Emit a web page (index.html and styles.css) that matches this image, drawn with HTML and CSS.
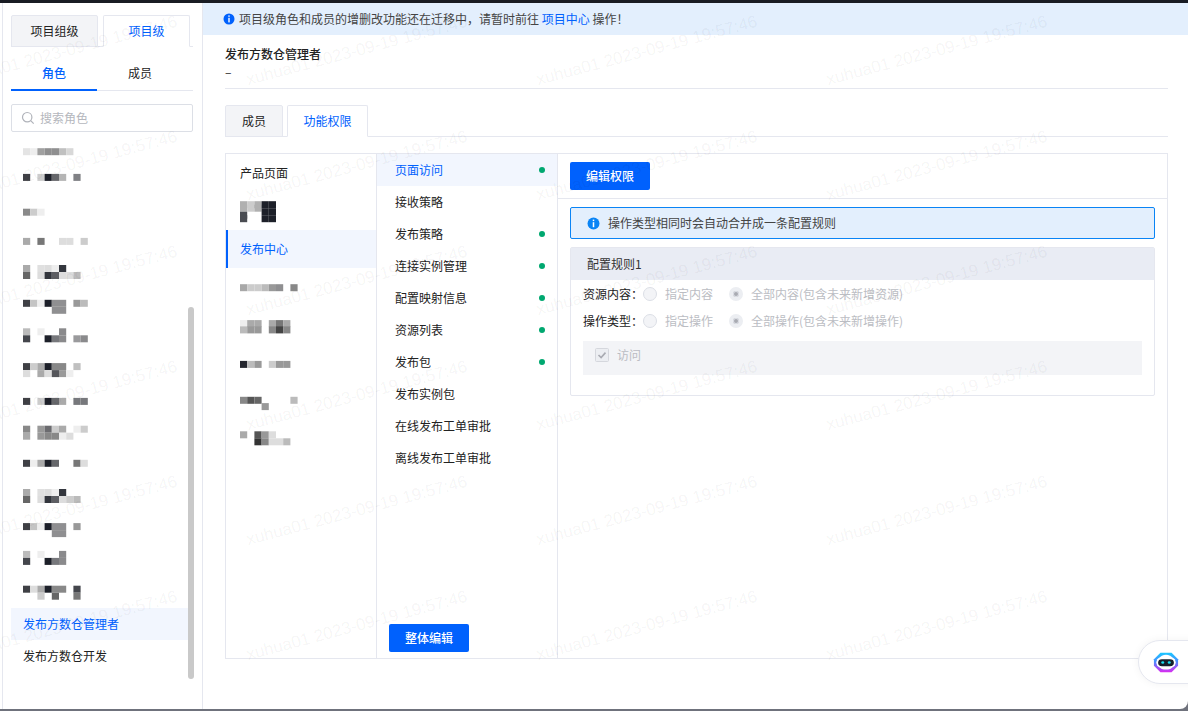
FILE: index.html
```html
<!DOCTYPE html>
<html lang="en">
<head>
    <meta charset="UTF-8">
    <title>功能权限</title>
    <link rel="stylesheet" href="styles.css">
</head>
<body>
<div class="window">
    <aside class="side">
        <div class="tabs side__tabs">
            <a class="tabs__item">项目组级</a>
            <a class="tabs__item tabs__item--on">项目级</a>
        </div>
        <div class="subtabs">
            <a class="subtabs__item subtabs__item--on">角色</a>
            <a class="subtabs__item">成员</a>
        </div>
        <label class="search">
            <svg class="search__icon" viewBox="0 0 14 14"><circle cx="6.2" cy="6.2" r="4.7"/><path d="M9.7 9.7l3 3"/></svg>
            <span>搜索角色</span>
        </label>
        <ul class="roles">
            <li class="roles__item"><svg class="mosaic" viewBox="0 0 10 4" preserveAspectRatio="none"><rect x="0" y="2.6" fill="#e4e4e4"/><rect x="1" y="2.6" fill="#eee"/><rect x="2" y="2.6" fill="#a0a0a0"/><rect x="3" y="2.6" fill="#8f8f90"/><rect x="4" y="2.6" fill="#8f8f90"/><rect x="5" y="2.6" fill="#c0c0c0"/><rect x="6" y="2.6" fill="#d8d8d8"/></svg></li>
            <li class="roles__item"><svg class="mosaic" viewBox="0 0 10 4" preserveAspectRatio="none"><rect x="0" y="1.7" fill="#3f4045"/><rect x="2" y="1.7" fill="#ccc"/><rect x="3" y="1.7" fill="#1d2029"/><rect x="4" y="1.7" fill="#66676b"/><rect x="5" y="1.7" fill="#b5b5b5"/><rect x="7" y="1.7" fill="#808185"/></svg></li>
            <li class="roles__item"><svg class="mosaic" viewBox="0 0 10 4" preserveAspectRatio="none"><rect x="0" y="2.1" fill="#8a8a8a"/><rect x="1" y="2.1" fill="#ccc"/><rect x="2" y="2.1" fill="#eee"/></svg></li>
            <li class="roles__item"><svg class="mosaic" viewBox="0 0 10 4" preserveAspectRatio="none"><rect x="0" y="1.7" fill="#aaa"/><rect x="2" y="1.7" fill="#777"/><rect x="5" y="1.7" fill="#ddd"/><rect x="6" y="1.7" fill="#ddd"/><rect x="8" y="1.7" fill="#ccc"/></svg></li>
            <li class="roles__item"><svg class="mosaic" viewBox="0 0 10 4" preserveAspectRatio="none"><rect x="0" y="1" fill="#aaa"/><rect x="0" y="2" fill="#666"/><rect x="2" y="1" fill="#e0e0e0"/><rect x="2" y="2" fill="#ddd"/><rect x="3" y="1" fill="#ddd"/><rect x="3" y="2" fill="#33363d"/><rect x="4" y="1" fill="#eee"/><rect x="4" y="2" fill="#5d5e63"/><rect x="5" y="1" fill="#34373e"/><rect x="5" y="2" fill="#ddd"/><rect x="6" y="2" fill="#ddd"/><rect x="7" y="2" fill="#bbb"/></svg></li>
            <li class="roles__item"><svg class="mosaic" viewBox="0 0 10 4" preserveAspectRatio="none"><rect x="0" y="1.4" fill="#3f4045"/><rect x="1" y="1.4" fill="#c4c4c4"/><rect x="2" y="1.4" fill="#eee"/><rect x="3" y="1.4" fill="#1d2029"/><rect x="4" y="1.4" fill="#8f8f91"/><rect x="5" y="1.4" fill="#8f8f91"/><rect x="4" y="2.4" fill="#8f8f91"/><rect x="5" y="2.4" fill="#8f8f91"/><rect x="7" y="1.4" fill="#999"/><rect x="8" y="1.4" fill="#bbb"/></svg></li>
            <li class="roles__item"><svg class="mosaic" viewBox="0 0 10 4" preserveAspectRatio="none"><rect x="0" y="0.9" fill="#bbb"/><rect x="0" y="1.9" fill="#44464c"/><rect x="2" y="0.9" fill="#eee"/><rect x="3" y="1.9" fill="#1d2029"/><rect x="4" y="1.9" fill="#77787c"/><rect x="5" y="0.9" fill="#8a8a8c"/><rect x="5" y="1.9" fill="#8a8a8c"/><rect x="7" y="1.9" fill="#9a9a9c"/><rect x="8" y="1.9" fill="#8a8a8c"/></svg></li>
            <li class="roles__item"><svg class="mosaic" viewBox="0 0 10 4" preserveAspectRatio="none"><rect x="0" y="1.3" fill="#3f4045"/><rect x="0" y="2.3" fill="#ddd"/><rect x="1" y="1.3" fill="#ccc"/><rect x="2" y="1.3" fill="#aaa"/><rect x="2" y="2.3" fill="#aaa"/><rect x="3" y="1.3" fill="#1d2029"/><rect x="3" y="2.3" fill="#ddd"/><rect x="4" y="1.3" fill="#888"/><rect x="4" y="2.3" fill="#55565b"/><rect x="5" y="1.3" fill="#888"/><rect x="5" y="2.3" fill="#999"/><rect x="6" y="2.3" fill="#eee"/><rect x="7" y="1.3" fill="#c0c0c0"/></svg></li>
            <li class="roles__item"><svg class="mosaic" viewBox="0 0 10 4" preserveAspectRatio="none"><rect x="0" y="1.7" fill="#3f4045"/><rect x="2" y="1.7" fill="#ccc"/><rect x="3" y="1.7" fill="#1d2029"/><rect x="4" y="1.7" fill="#66676b"/><rect x="5" y="1.7" fill="#aaa"/><rect x="7" y="1.7" fill="#77787c"/><rect x="8" y="1.7" fill="#77787c"/></svg></li>
            <li class="roles__item"><svg class="mosaic" viewBox="0 0 10 4" preserveAspectRatio="none"><rect x="0" y="1.1" fill="#888"/><rect x="0" y="2.1" fill="#aaa"/><rect x="2" y="1.1" fill="#999"/><rect x="2" y="2.1" fill="#999"/><rect x="3" y="1.1" fill="#6b6b6f"/><rect x="3" y="2.1" fill="#888"/><rect x="4" y="1.1" fill="#ccc"/><rect x="4" y="2.1" fill="#888"/><rect x="5" y="1.1" fill="#aaa"/><rect x="5" y="2.1" fill="#eee"/><rect x="6" y="2.1" fill="#ddd"/><rect x="7" y="1.1" fill="#eee"/><rect x="8" y="1.1" fill="#ccc"/></svg></li>
            <li class="roles__item"><svg class="mosaic" viewBox="0 0 10 4" preserveAspectRatio="none"><rect x="0" y="1.4" fill="#3f4045"/><rect x="1" y="1.4" fill="#eee"/><rect x="2" y="1.4" fill="#aaa"/><rect x="3" y="1.4" fill="#1d2029"/><rect x="4" y="1.4" fill="#66676b"/><rect x="7" y="1.4" fill="#777"/><rect x="8" y="1.4" fill="#ddd"/></svg></li>
            <li class="roles__item"><svg class="mosaic" viewBox="0 0 10 4" preserveAspectRatio="none"><rect x="0" y="1" fill="#aaa"/><rect x="0" y="2" fill="#666"/><rect x="2" y="1" fill="#e0e0e0"/><rect x="2" y="2" fill="#ddd"/><rect x="3" y="1" fill="#ddd"/><rect x="3" y="2" fill="#33363d"/><rect x="4" y="1" fill="#eee"/><rect x="4" y="2" fill="#5d5e63"/><rect x="5" y="1" fill="#34373e"/><rect x="5" y="2" fill="#ddd"/><rect x="6" y="2" fill="#ccc"/><rect x="7" y="2" fill="#bbb"/></svg></li>
            <li class="roles__item"><svg class="mosaic" viewBox="0 0 10 4" preserveAspectRatio="none"><rect x="0" y="1.3" fill="#3f4045"/><rect x="1" y="1.3" fill="#c4c4c4"/><rect x="2" y="1.3" fill="#eee"/><rect x="3" y="1.3" fill="#1d2029"/><rect x="4" y="1.3" fill="#8f8f91"/><rect x="5" y="1.3" fill="#8f8f91"/><rect x="4" y="2.3" fill="#8f8f91"/><rect x="5" y="2.3" fill="#8f8f91"/><rect x="7" y="1.3" fill="#999"/></svg></li>
            <li class="roles__item"><svg class="mosaic" viewBox="0 0 10 4" preserveAspectRatio="none"><rect x="0" y="0.7" fill="#bbb"/><rect x="0" y="1.7" fill="#44464c"/><rect x="2" y="0.7" fill="#eee"/><rect x="3" y="1.7" fill="#1d2029"/><rect x="4" y="1.7" fill="#77787c"/><rect x="5" y="0.7" fill="#8a8a8c"/><rect x="5" y="1.7" fill="#8a8a8c"/></svg></li>
            <li class="roles__item"><svg class="mosaic" viewBox="0 0 10 4" preserveAspectRatio="none"><rect x="0" y="1.1" fill="#3f4045"/><rect x="1" y="1.1" fill="#ddd"/><rect x="2" y="1.1" fill="#aaa"/><rect x="3" y="1.1" fill="#1d2029"/><rect x="4" y="1.1" fill="#888"/><rect x="5" y="1.1" fill="#888"/><rect x="7" y="1.1" fill="#44464c"/><rect x="7" y="2.1" fill="#777"/><rect x="2" y="2.1" fill="#ccc"/><rect x="4" y="2.1" fill="#666"/></svg></li>
            <li class="roles__item roles__item--on">发布方数仓管理者</li>
            <li class="roles__item">发布方数仓开发</li>
        </ul>
        <div class="side__thumb"></div>
    </aside>

    <main class="main">
        <div class="notice">
            <svg class="info" viewBox="0 0 12 12"><circle cx="6" cy="6" r="5.5"/><rect x="5.3" y="2.4" width="1.4" height="1.4" fill="#fff"/><rect x="5.3" y="4.8" width="1.4" height="4.6" fill="#fff"/></svg>
            <span>项目级角色和成员的增删改功能还在迁移中，请暂时前往 <a class="link">项目中心</a> 操作！</span>
        </div>
        <div class="main__body">
            <div class="head">
                <div class="head__title">发布方数仓管理者</div>
                <div>–</div>
            </div>
            <div class="tabs main__tabs">
                <a class="tabs__item tabs__item--small">成员</a>
                <a class="tabs__item tabs__item--wide tabs__item--on">功能权限</a>
            </div>
            <div class="panel">
                <ul class="modules">
                    <li class="modules__item">产品页面</li>
                    <li class="modules__item"><svg class="mosaic" viewBox="0 0 10 4" preserveAspectRatio="none"><rect x="0" y="0.6" fill="#b0b0b0"/><rect x="0" y="1.1" fill="#b0b0b0"/><rect x="0" y="2.1" fill="#4a4c52"/><rect x="0" y="2.6" fill="#4a4c52"/><rect x="1" y="0.6" fill="#ccc"/><rect x="1" y="1.1" fill="#ccc"/><rect x="2" y="0.6" fill="#b0b0b0"/><rect x="2" y="1.1" fill="#b0b0b0"/><rect x="3" y="0.6" fill="#1d2029"/><rect x="3" y="1.6" fill="#1d2029"/><rect x="3" y="2.6" fill="#1d2029"/><rect x="4" y="0.6" fill="#1d2029"/><rect x="4" y="1.6" fill="#1d2029"/><rect x="4" y="2.6" fill="#1d2029"/></svg></li>
                    <li class="modules__item modules__item--on">发布中心</li>
                    <li class="modules__item"><svg class="mosaic" viewBox="0 0 10 4" preserveAspectRatio="none"><rect x="0" y="1.6" fill="#a8a8a8"/><rect x="1" y="1.6" fill="#ccc"/><rect x="2" y="1.6" fill="#ccc"/><rect x="3" y="1.6" fill="#bbb"/><rect x="4" y="1.6" fill="#999"/><rect x="5" y="1.6" fill="#8f8f91"/><rect x="7" y="1.6" fill="#888"/></svg></li>
                    <li class="modules__item"><svg class="mosaic" viewBox="0 0 10 4" preserveAspectRatio="none"><rect x="0" y="1.3" fill="#eee"/><rect x="0" y="2.2" fill="#bbb"/><rect x="1" y="1.3" fill="#aaa"/><rect x="1" y="2.2" fill="#999"/><rect x="2" y="1.3" fill="#aaa"/><rect x="2" y="2.2" fill="#999"/><rect x="4" y="1.3" fill="#aaa"/><rect x="4" y="2.2" fill="#888"/><rect x="5" y="1.3" fill="#777"/><rect x="5" y="2.2" fill="#444"/><rect x="6" y="1.3" fill="#aaa"/><rect x="6" y="2.2" fill="#888"/></svg></li>
                    <li class="modules__item"><svg class="mosaic" viewBox="0 0 10 4" preserveAspectRatio="none"><rect x="0" y="1.7" fill="#24262e"/><rect x="1" y="1.7" fill="#bbb"/><rect x="2" y="1.7" fill="#999"/><rect x="4" y="1.7" fill="#ccc"/><rect x="5" y="1.7" fill="#999"/><rect x="6" y="1.7" fill="#999"/></svg></li>
                    <li class="modules__item"><svg class="mosaic" viewBox="0 0 10 4" preserveAspectRatio="none"><rect x="0" y="1.4" fill="#888"/><rect x="1" y="1.4" fill="#555"/><rect x="2" y="1.4" fill="#666"/><rect x="3" y="2.3" fill="#999"/><rect x="7" y="1.4" fill="#bbb"/></svg></li>
                    <li class="modules__item"><svg class="mosaic" viewBox="0 0 10 4" preserveAspectRatio="none"><rect x="0" y="0.9" fill="#aaa"/><rect x="2" y="0.9" fill="#555"/><rect x="3" y="0.9" fill="#999"/><rect x="4" y="0.9" fill="#ddd"/><rect x="2" y="1.9" fill="#333"/><rect x="3" y="1.9" fill="#888"/><rect x="4" y="1.9" fill="#ddd"/><rect x="5" y="1.9" fill="#ddd"/><rect x="6" y="1.9" fill="#bbb"/></svg></li>
                </ul>
                <div class="pages">
                    <ul class="pages__list">
                        <li class="pages__item pages__item--on">页面访问<i class="dot"></i></li>
                        <li class="pages__item">接收策略</li>
                        <li class="pages__item">发布策略<i class="dot"></i></li>
                        <li class="pages__item">连接实例管理<i class="dot"></i></li>
                        <li class="pages__item">配置映射信息<i class="dot"></i></li>
                        <li class="pages__item">资源列表<i class="dot"></i></li>
                        <li class="pages__item">发布包<i class="dot"></i></li>
                        <li class="pages__item">发布实例包</li>
                        <li class="pages__item">在线发布工单审批</li>
                        <li class="pages__item">离线发布工单审批</li>
                    </ul>
                    <button class="btn pages__btn">整体编辑</button>
                </div>
                <div class="detail">
                    <div class="detail__bar"><button class="btn">编辑权限</button></div>
                    <div class="detail__body">
                        <div class="tip">
                            <svg class="info info--tip" viewBox="0 0 12 12"><circle cx="6" cy="6" r="5.5"/><rect x="5.3" y="2.4" width="1.4" height="1.4" fill="#fff"/><rect x="5.3" y="4.8" width="1.4" height="4.6" fill="#fff"/></svg>
                            操作类型相同时会自动合并成一条配置规则
                        </div>
                        <div class="rule">
                            <div class="rule__head">配置规则1</div>
                            <div class="rule__body">
                                <div class="field">
                                    <span class="field__name">资源内容：</span>
                                    <span class="radio"><i class="radio__box"></i>指定内容</span>
                                    <span class="radio"><i class="radio__box radio__box--on"></i>全部内容(包含未来新增资源)</span>
                                </div>
                                <div class="field">
                                    <span class="field__name">操作类型：</span>
                                    <span class="radio"><i class="radio__box"></i>指定操作</span>
                                    <span class="radio"><i class="radio__box radio__box--on"></i>全部操作(包含未来新增操作)</span>
                                </div>
                                <div class="actions">
                                    <svg class="check" viewBox="0 0 14 14"><rect x="0.5" y="0.5" width="13" height="13" rx="1"/><path d="M3.5 7l2.6 2.6 4.4-5"/></svg>
                                    访问
                                </div>
                            </div>
                        </div>
                    </div>
                </div>
            </div>
        </div>
    </main>

    <div class="watermark">
        <span>xuhua01 2023-09-19 19:57:46</span><span>xuhua01 2023-09-19 19:57:46</span><span>xuhua01 2023-09-19 19:57:46</span><span>xuhua01 2023-09-19 19:57:46</span>
        <span>xuhua01 2023-09-19 19:57:46</span><span>xuhua01 2023-09-19 19:57:46</span><span>xuhua01 2023-09-19 19:57:46</span><span>xuhua01 2023-09-19 19:57:46</span>
        <span>xuhua01 2023-09-19 19:57:46</span><span>xuhua01 2023-09-19 19:57:46</span><span>xuhua01 2023-09-19 19:57:46</span><span>xuhua01 2023-09-19 19:57:46</span>
        <span>xuhua01 2023-09-19 19:57:46</span><span>xuhua01 2023-09-19 19:57:46</span><span>xuhua01 2023-09-19 19:57:46</span><span>xuhua01 2023-09-19 19:57:46</span>
        <span>xuhua01 2023-09-19 19:57:46</span><span>xuhua01 2023-09-19 19:57:46</span><span>xuhua01 2023-09-19 19:57:46</span><span>xuhua01 2023-09-19 19:57:46</span>
        <span>xuhua01 2023-09-19 19:57:46</span><span>xuhua01 2023-09-19 19:57:46</span><span>xuhua01 2023-09-19 19:57:46</span><span>xuhua01 2023-09-19 19:57:46</span>
    </div>

    <div class="assistant">
        <svg class="assistant__bot" viewBox="0 0 28 26" preserveAspectRatio="none">
            <defs>
                <linearGradient id="botEdge" x1="0" y1="0" x2="0" y2="1">
                    <stop offset="0" stop-color="#19c8ff"/>
                    <stop offset="0.45" stop-color="#4a8cff"/>
                    <stop offset="1" stop-color="#d92cf0"/>
                </linearGradient>
            </defs>
            <path d="M8 1h12l7 8v8l-7 8H8l-7-8V9z" fill="url(#botEdge)"/>
            <path d="M9.5 4.5c3-1.6 6-1.6 9 0l5 4.5v8l-5 4c-3 1-6 1-9 0l-5-4V9z" fill="#fff"/>
            <rect x="3.5" y="7.5" width="21" height="11" rx="5.5" fill="#fff"/>
            <rect x="5.5" y="9" width="17" height="8.5" rx="4.2" fill="#16202c"/>
            <circle cx="10.5" cy="13" r="1.6" fill="#18e0f0"/>
            <circle cx="17.5" cy="13" r="1.6" fill="#18e0f0"/>
        </svg>
    </div>
</div>
</body>
</html>
```

FILE: styles.css
```css
* { box-sizing: border-box; }

html, body {
    margin: 0;
    padding: 0;
    height: 100%;
    overflow: hidden;
    background: #6f727c;
}

ul {
    list-style: none;
    margin: 0;
    padding: 0;
}

i { display: block; }

.window {
    position: relative;
    display: flex;
    height: 709px;
    border-top: 3px solid #191c23;
    border-radius: 0 0 8px 0;
    background: #fff;
    overflow: hidden;
    font: 12px/18px "Noto Sans CJK SC", "Liberation Sans", sans-serif;
    color: #222;
    padding-left: 2px;
}

/* sidebar */
.side {
    position: relative;
    flex: 0 0 201px;
    border-left: 1px solid #e5e7ef;
    border-right: 1px solid #e5e7ef;
    padding: 12px 9px 0 8px;
}

.tabs {
    display: flex;
    gap: 4px;
    border-bottom: 1px solid #e5e7ef;
}

.tabs__item {
    margin-bottom: -1px;
    width: 87px;
    height: 32px;
    border: 1px solid #e5e7ef;
    border-radius: 2px 2px 0 0;
    background: #f3f4f7;
    text-align: center;
    line-height: 30px;
}

.tabs__item--small { width: 58px; }
.tabs__item--wide { width: 81px; }

.tabs__item--on {
    background: #fff;
    border-bottom-color: #fff;
    color: #0061fd;
}

.side__tabs {
    gap: 5px;
    height: 32px;
}

.subtabs {
    display: flex;
    height: 44px;
    border-bottom: 1px solid #e5e7ef;
}

.subtabs__item {
    flex: 0 0 86px;
    margin-bottom: -1px;
    height: 44px;
    overflow: hidden;
    text-align: center;
    line-height: 52px;
}

.subtabs__item--on {
    border-bottom: 2px solid #0061fd;
    color: #0061fd;
    font-weight: 500;
}

.search {
    display: flex;
    align-items: center;
    gap: 5px;
    margin-top: 13px;
    height: 28px;
    border: 1px solid #dcdfe6;
    border-radius: 2px;
    padding-left: 9px;
    color: #b5b7bd;
}

.search__icon {
    width: 14px;
    height: 14px;
    fill: none;
    stroke: #b0b3ba;
    stroke-width: 1.2;
}

.roles { margin-top: -4px; }

.roles__item {
    display: flex;
    align-items: center;
    height: 32px;
    padding-left: 12px;
    margin-right: 5px;
}

.roles__item--on {
    background: #f2f6fe;
    color: #0061fd;
}

.mosaic {
    display: block;
    flex: none;
    width: 72px;
    height: 28px;
}

.mosaic rect {
    width: 1px;
    height: 1px;
}

.side__thumb {
    position: absolute;
    top: 304px;
    left: 185px;
    width: 6px;
    height: 372px;
    border-radius: 3px;
    background: #c9c9c9;
}

/* main area */
.main {
    flex: 1;
    min-width: 0;
}

.notice {
    display: flex;
    align-items: center;
    gap: 4px;
    height: 32px;
    padding-left: 20px;
    background: #e3effd;
    color: #444;
}

.info {
    flex: none;
    width: 12px;
    height: 12px;
    fill: #0061fd;
}

.info--tip {
    width: 13px;
    height: 13px;
    fill: #0a84f5;
}

.link { color: #0061fd; }

.main__body { padding: 0 20px 0 22px; }

.head {
    margin-top: 10px;
    height: 44px;
    border-bottom: 1px solid #e5e7ef;
}

.head__title { font-weight: 500; }

.main__tabs {
    margin-top: 16px;
    height: 32px;
}

.panel {
    display: flex;
    margin-top: 16px;
    height: 506px;
    border: 1px solid #e5e7ef;
}

.modules {
    flex: 0 0 151px;
    border-right: 1px solid #e5e7ef;
}

.modules__item {
    display: flex;
    align-items: center;
    height: 38px;
    padding-left: 14px;
}

.modules__item--on {
    padding-left: 12px;
    border-left: 2px solid #0061fd;
    background: #f2f6fe;
    color: #0061fd;
}

.pages {
    display: flex;
    flex-direction: column;
    flex: 0 0 181px;
    border-right: 1px solid #e5e7ef;
    padding-bottom: 6px;
}

.pages__item {
    display: flex;
    align-items: center;
    justify-content: space-between;
    height: 32px;
    padding: 0 12px 0 18px;
}

.pages__item--on {
    background: #f2f6fe;
    color: #0061fd;
}

.dot {
    width: 6px;
    height: 6px;
    border-radius: 50%;
    background: #00a870;
}

.pages__btn { margin: auto 0 0 12px; }

.btn {
    width: 80px;
    height: 28px;
    padding: 0;
    border: 0;
    border-radius: 2px;
    background: #0061fd;
    color: #fff;
    font: 500 12px/28px "Noto Sans CJK SC", "Liberation Sans", sans-serif;
}

.detail {
    flex: 1;
    min-width: 0;
}

.detail__bar {
    height: 45px;
    padding: 8px 12px;
    border-bottom: 1px solid #e5e7ef;
}

.detail__body { padding: 8px 12px; }

.tip {
    display: flex;
    align-items: center;
    gap: 8px;
    height: 32px;
    padding-left: 16px;
    border: 1px solid #0a84f5;
    border-radius: 2px;
    background: #e3effd;
    color: #444;
}

.rule {
    margin-top: 8px;
    height: 149px;
    border: 1px solid #e5e7ef;
    border-radius: 2px;
}

.rule__head {
    height: 32px;
    padding-left: 16px;
    background: #e9ecf4;
    line-height: 31px;
    color: #333;
}

.rule__body { padding: 0 12px; }

.field {
    display: flex;
    align-items: center;
    height: 27px;
}

.field__name { flex: 0 0 60px; }

.radio {
    display: flex;
    align-items: center;
    gap: 8px;
    margin-right: 16px;
    color: #bbbdc3;
}

.radio__box {
    width: 14px;
    height: 14px;
    border: 1px solid #dcdfe6;
    border-radius: 50%;
    background: #f3f4f7;
}

.radio__box--on {
    border: 4.5px solid #eceef2;
    background: #a9abb2;
    box-shadow: 0 0 0 1px #dcdfe6 inset;
}

.actions {
    display: flex;
    align-items: center;
    gap: 8px;
    margin-top: 7px;
    height: 34px;
    padding: 0 0 6px 12px;
    background: #f3f4f7;
    color: #bbbdc3;
}

.check {
    width: 14px;
    height: 14px;
    fill: #eceef2;
    stroke: #d5d7dd;
}

.check path {
    fill: none;
    stroke: #a9abb2;
    stroke-width: 1.6;
}

/* overlays */
.watermark {
    position: absolute;
    top: -10px;
    left: -78px;
    display: grid;
    grid-template-columns: repeat(4, 290px);
    grid-auto-rows: 115px;
    pointer-events: none;
    font: 17px/20px "Liberation Sans", sans-serif;
    color: rgba(0, 0, 0, 0.05);
    white-space: nowrap;
}

.watermark span {
    align-self: center;
    justify-self: center;
    transform: rotate(-15deg);
}

.assistant {
    position: absolute;
    top: 637px;
    right: -24px;
    display: flex;
    align-items: center;
    width: 74px;
    height: 44px;
    padding-left: 14px;
    border: 1px solid #e5e7ef;
    border-radius: 22px;
    background: #fff;
    box-shadow: 0 0 8px rgba(0, 0, 0, 0.05);
}

.assistant__bot {
    width: 26px;
    height: 21px;
}
```
